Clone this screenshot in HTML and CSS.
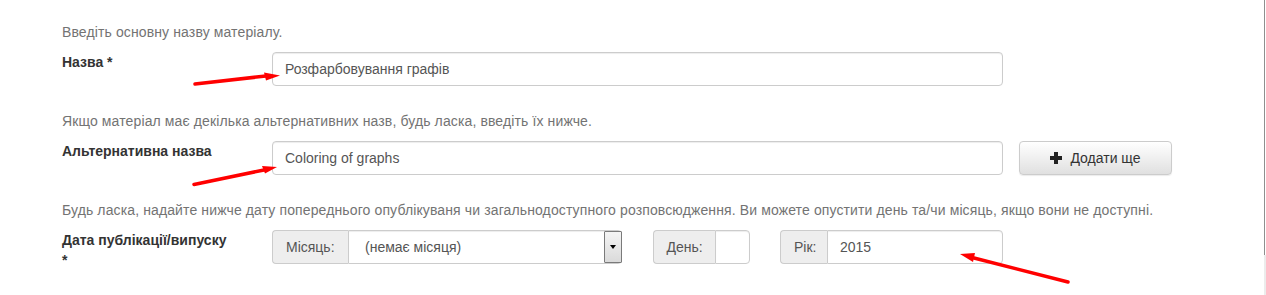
FILE: index.html
```html
<!DOCTYPE html>
<html lang="uk">
<head>
    <meta charset="UTF-8">
    <meta name="viewport" content="width=device-width, initial-scale=1.0">
    <title>Матеріал</title>
    <link rel="stylesheet" href="styles.css">
</head>
<body>

    <form class="sheet">
        <div class="group">
            <p class="help">Введіть основну назву матеріалу.</p>
            <div class="row">
                <label class="label" for="title">Назва *</label>
                <input class="field" id="title" type="text" value="Розфарбовування графів">
            </div>
        </div>

        <div class="group">
            <p class="help">Якщо матеріал має декілька альтернативних назв, будь ласка, введіть їх нижче.</p>
            <div class="row">
                <label class="label" for="alt-title">Альтернативна назва</label>
                <input class="field" id="alt-title" type="text" value="Coloring of graphs">
                <button class="add-btn" type="button">
                    <svg class="plus" width="12" height="12" viewBox="0 0 12 12"><rect x="4" y="0" width="4" height="12"/><rect x="0" y="4" width="12" height="4"/></svg>
                    Додати ще
                </button>
            </div>
        </div>

        <div class="group">
            <p class="help">Будь ласка, надайте нижче дату попереднього опублікуваня чи загальнодоступного розповсюдження. Ви можете опустити день та/чи місяць, якщо вони не доступні.</p>
            <div class="row">
                <label class="label">Дата публікації/випуску *</label>
                <div class="date-row">
                    <div class="input-group month">
                        <span class="addon month-addon">Місяць:</span>
                        <span class="select-wrap">
                            <select class="select">
                                <option>(немає місяця)</option>
                            </select>
                            <span class="select-arrow"></span>
                        </span>
                    </div>
                    <div class="input-group day">
                        <span class="addon day-addon">День:</span>
                        <input class="group-field" type="text" value="">
                    </div>
                    <div class="input-group year">
                        <span class="addon year-addon">Рік:</span>
                        <input class="group-field" type="text" value="2015">
                    </div>
                </div>
            </div>
        </div>
    </form>

    <div class="edge">
        <span class="edge-top"></span>
        <span class="edge-bottom"></span>
    </div>

    <svg class="arrows" width="1266" height="295" viewBox="0 0 1266 295">
        <line x1="195" y1="84" x2="266" y2="76" />
        <polygon points="280,75.5 264,72.5 266,80.5" />
        <line x1="194" y1="184.5" x2="264" y2="170" />
        <polygon points="277,167 262,166 265,173.5" />
        <line x1="1068" y1="282" x2="974" y2="258" />
        <polygon points="960,254 975,253 973,262" />
    </svg>

</body>
</html>
```

FILE: styles.css
```css
body {
    margin: 0;
    font-family: "Liberation Sans", Arial, sans-serif;
    font-size: 14px;
    line-height: 20px;
    color: #333;
    background-color: #fff;
    display: flex;
    position: relative;
    height: 295px;
    overflow: hidden;
}
.sheet {
    flex: 1;
    padding: 22px 0 0 62px;
}
.group {
    margin-bottom: 25px;
}
.help {
    margin: 0 0 10px;
    color: #737373;
    letter-spacing: 0.12px;
}
.row {
    display: flex;
    align-items: flex-start;
}
.label {
    flex: none;
    width: 210px;
    padding-right: 42px;
    box-sizing: border-box;
    font-weight: bold;
    color: #333;
}
.field {
    width: 731px;
    height: 34px;
    box-sizing: border-box;
    padding: 6px 12px;
    border: 1px solid #ccc;
    border-radius: 4px;
    box-shadow: inset 0 1px 1px rgba(0, 0, 0, 0.075);
    font-family: inherit;
    font-size: 14px;
    color: #555;
    margin: 0;
}
.add-btn {
    margin-left: 16px;
    width: 153px;
    height: 34px;
    box-sizing: border-box;
    border: 1px solid #ccc;
    border-radius: 4px;
    background: linear-gradient(#fff, #e0e0e0);
    box-shadow: 0 1px 1px rgba(0, 0, 0, 0.08);
    font-family: inherit;
    font-size: 14px;
    color: #333;
    display: flex;
    align-items: center;
    justify-content: center;
    gap: 8px;
    padding: 0;
}
.plus { fill: #222; }
.date-row {
    width: 731px;
    display: flex;
    justify-content: space-between;
}
.input-group {
    display: flex;
    height: 34px;
}
.month { width: 350px; }
.day { width: 97px; }
.year { width: 223px; }
.addon {
    flex: none;
    box-sizing: border-box;
    height: 34px;
    padding: 6px 0 6px 13px;
    background-color: #eee;
    border: 1px solid #ccc;
    border-right: none;
    border-radius: 4px 0 0 4px;
    color: #555;
}
.month-addon { width: 76px; }
.day-addon { width: 62px; }
.year-addon { width: 47px; }
.group-field,
.select {
    flex: 1;
    min-width: 0;
    height: 34px;
    box-sizing: border-box;
    margin: 0;
    padding: 6px 12px;
    border: 1px solid #ccc;
    border-radius: 0 4px 4px 0;
    box-shadow: inset 0 1px 1px rgba(0, 0, 0, 0.075);
    font-family: inherit;
    font-size: 14px;
    color: #555;
    background-color: #fff;
}
.select-wrap {
    flex: 1;
    display: flex;
    position: relative;
}
.select {
    appearance: none;
    -webkit-appearance: none;
    padding-left: 16px;
}
.select-arrow {
    position: absolute;
    right: 0;
    top: 1px;
    bottom: 1px;
    width: 18px;
    box-sizing: border-box;
    border: 1px solid #7a7a7a;
    border-radius: 1px;
    background: linear-gradient(#f4f4f4, #dadada);
    display: flex;
    align-items: center;
    justify-content: center;
}
.select-arrow::after {
    content: "";
    border-left: 3px solid transparent;
    border-right: 3px solid transparent;
    border-top: 4px solid #000;
}
.edge {
    flex: none;
    width: 2px;
    display: flex;
    flex-direction: column;
}
.edge-top {
    height: 255px;
    border-left: 1px solid #8f8f8f;
}
.edge-bottom {
    flex: 1;
    background-color: #ececec;
}
.arrows {
    position: absolute;
    top: 0;
    left: 0;
    pointer-events: none;
}
.arrows line {
    stroke: #f00;
    stroke-width: 3.5;
    stroke-linecap: round;
}
.arrows polygon {
    fill: #f00;
}
```
